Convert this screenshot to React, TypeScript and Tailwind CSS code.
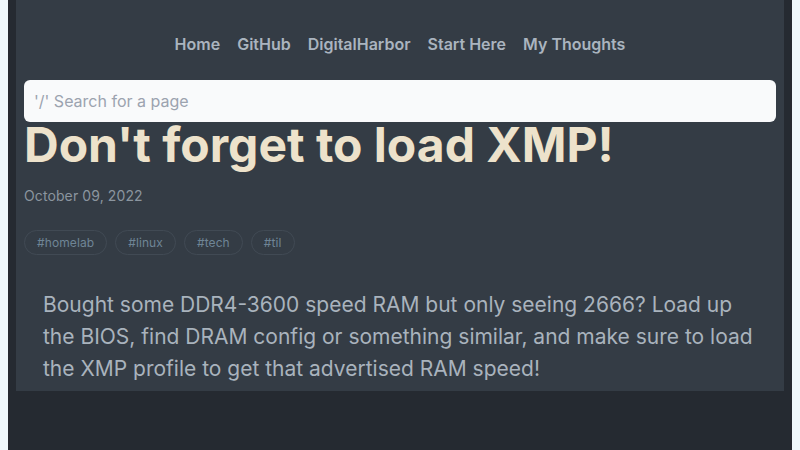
import React from 'react';

const links = ['Home', 'GitHub', 'DigitalHarbor', 'Start Here', 'My Thoughts'];
const tags = ['#homelab', '#linux', '#tech', '#til'];

export default function App() {
    return (
        <div className="w-[800px] h-[450px] bg-[#eff8fc] px-2 overflow-hidden font-['Inter',sans-serif]">
            <div className="h-full bg-[#252a31] px-2">
                <div className="bg-[#343c45] pb-[6px]">
                    {/* Nav */}
                    <nav className="flex justify-center gap-[17px] pt-[33px] pb-[25px] text-base font-semibold text-[#aab4bf]">
                        {links.map((l) => (
                            <a key={l} className="leading-[22px]">{l}</a>
                        ))}
                    </nav>

                    <div className="px-2">
                        {/* Search */}
                        <div className="h-[42px] bg-[#f9fafb] rounded-md flex items-center px-[10px] text-base text-[#9ca3af]">
                            '/' Search for a page
                        </div>

                        {/* Title */}
                        <h1 className="text-5xl font-bold leading-[46px] text-[#ede2cb]">
                            Don't forget to load XMP!
                        </h1>

                        <p className="mt-[18px] text-sm text-[#8b959f] leading-5 tracking-[0.1px]">October 09, 2022</p>

                        <div className="flex gap-2 mt-[24px]">
                            {tags.map((t) => (
                                <span key={t} className="h-[25px] px-3 flex items-center rounded-full border border-[#414a54] text-xs text-[#6f8596] tracking-[0.1px]">
                                    {t}
                                </span>
                            ))}
                        </div>
                    </div>

                    <p className="mt-[34px] px-[27px] text-[21px] leading-8 text-[#a9b3bd]">
                        Bought some DDR4-3600 speed RAM but only seeing 2666? Load up the BIOS, find DRAM config or something similar, and make sure to load the XMP profile to get that advertised RAM speed!
                    </p>
                </div>
            </div>
        </div>
    );
}
